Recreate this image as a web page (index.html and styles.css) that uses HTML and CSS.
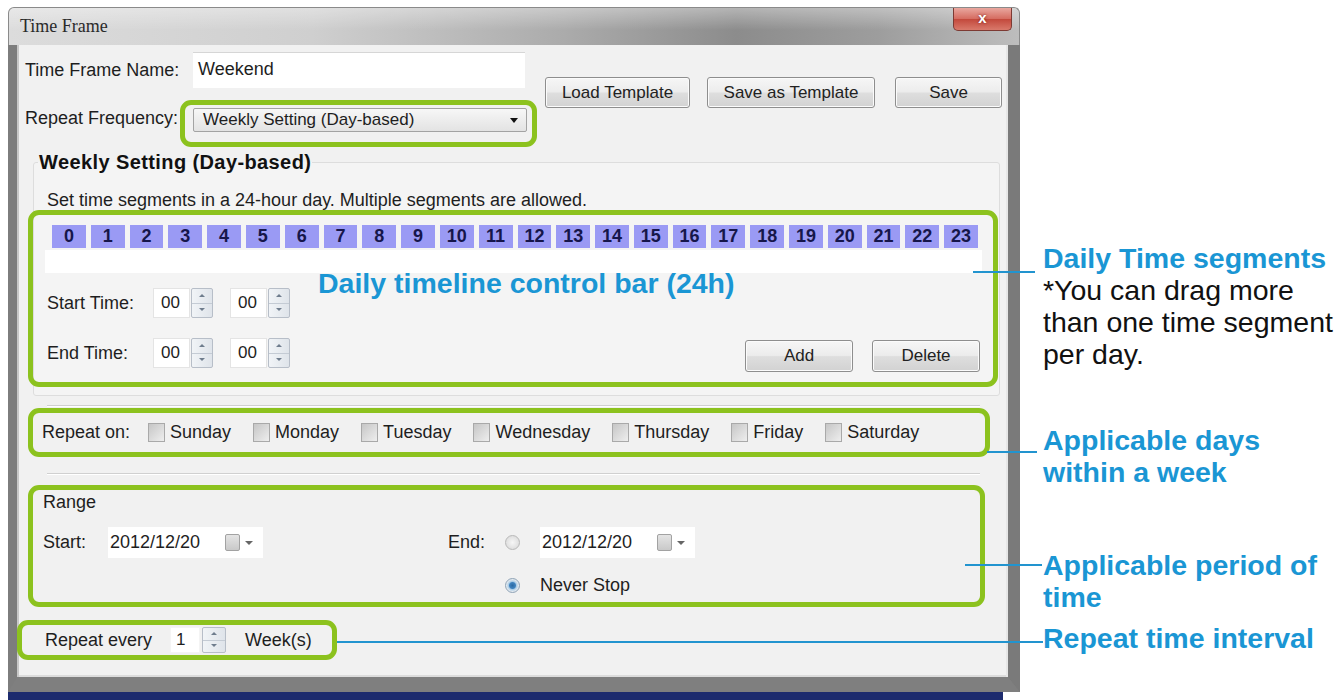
FILE: index.html
```html
<!DOCTYPE html>
<html>

	<head>
		<meta charset="utf-8" />
		<title>Time Frame</title>
		<link rel="stylesheet" href="styles.css">
	</head>

	<body>
		<div class="page">
			<div class="screen">
				<div class="window">
					<div class="titlebar">
						<span class="title">Time Frame</span>
						<span class="close">x</span>
					</div>
					<div class="frame">
						<div class="content">
							<div class="top">
								<div class="top-left">
									<div class="name-row">
										<span class="lbl-name">Time Frame Name:</span>
										<div class="textbox">Weekend</div>
									</div>
									<div class="freq-row">
										<span class="lbl-freq">Repeat Frequency:</span>
										<div class="hl hl-select">
											<div class="select">Weekly Setting (Day-based)<span class="caret"></span></div>
										</div>
									</div>
								</div>
								<div class="top-buttons">
									<button class="btn btn-load">Load Template</button>
									<button class="btn btn-tpl">Save as Template</button>
									<button class="btn btn-save">Save</button>
								</div>
							</div>

							<fieldset class="weekly">
								<legend>Weekly Setting (Day-based)</legend>
								<p class="hint">Set time segments in a 24-hour day. Multiple segments are allowed.</p>
								<div class="hl hl-timeline">
									<div class="hours">
										<span>0</span><span>1</span><span>2</span><span>3</span><span>4</span><span>5</span>
										<span>6</span><span>7</span><span>8</span><span>9</span><span>10</span><span>11</span>
										<span>12</span><span>13</span><span>14</span><span>15</span><span>16</span><span>17</span>
										<span>18</span><span>19</span><span>20</span><span>21</span><span>22</span><span>23</span>
									</div>
									<div class="strip"></div>
									<div class="note-bar">Daily timeline control bar (24h)</div>
									<div class="time-row">
										<span class="lbl-time">Start Time:</span>
										<span class="num">00</span><span class="spin"><i></i><i></i></span>
										<span class="num num-2">00</span><span class="spin"><i></i><i></i></span>
									</div>
									<div class="time-row end">
										<span class="lbl-time">End Time:</span>
										<span class="num">00</span><span class="spin"><i></i><i></i></span>
										<span class="num num-2">00</span><span class="spin"><i></i><i></i></span>
										<button class="btn btn-add">Add</button>
										<button class="btn btn-del">Delete</button>
									</div>
								</div>
							</fieldset>

							<hr class="sep">
							<div class="hl hl-days">
								<span class="lbl-repeat">Repeat on:</span>
								<span class="day"><span class="check"></span>Sunday</span>
								<span class="day"><span class="check"></span>Monday</span>
								<span class="day"><span class="check"></span>Tuesday</span>
								<span class="day"><span class="check"></span>Wednesday</span>
								<span class="day"><span class="check"></span>Thursday</span>
								<span class="day"><span class="check"></span>Friday</span>
								<span class="day"><span class="check"></span>Saturday</span>
							</div>
							<hr class="sep sep-2">

							<div class="hl hl-range">
								<div class="range-title">Range</div>
								<div class="range-row">
									<div class="start-part">
										<span class="lbl-start">Start:</span>
										<span class="date">2012/12/20<span class="cal"></span><span class="dd"></span></span>
									</div>
									<div class="end-part">
										<span>End:</span>
										<span class="radio"></span>
										<span class="date">2012/12/20<span class="cal"></span><span class="dd"></span></span>
										<span></span>
										<span class="radio on"></span>
										<span>Never Stop</span>
									</div>
								</div>
							</div>

							<div class="hl hl-repeat">
								<span class="lbl-every">Repeat every</span>
								<span class="num one">1</span><span class="spin small"><i></i><i></i></span>
								<span class="weeks">Week(s)</span>
							</div>
						</div>
					</div>
				</div>
				<div class="taskbar"></div>
			</div>

			<div class="notes">
				<div class="note-block">
					<div class="note-title">Daily Time segments</div>
					<div class="note-text">*You can drag more<br>than one time segment<br>per day.</div>
				</div>
				<div class="note-block note-days">
					<div class="note-title">Applicable days<br>within a week</div>
				</div>
				<div class="note-block note-period">
					<div class="note-title">Applicable period of<br>time</div>
				</div>
				<div class="note-block note-interval">
					<div class="note-title">Repeat time interval</div>
				</div>
			</div>

			<!-- connector lines from the green boxes to the notes -->
			<span class="link link-1"></span>
			<span class="link link-2"></span>
			<span class="link link-3"></span>
			<span class="link link-4"></span>
		</div>
	</body>

</html>
```

FILE: styles.css
```css
* {
	margin: 0;
	padding: 0;
	box-sizing: border-box;
}

body {
	font-family: "Liberation Sans", Arial, sans-serif;
	font-size: 18px;
	color: #1e1e1e;
	background: #fff;
}

.page {
	position: relative;
	width: 1340px;
	height: 700px;
	display: flex;
	overflow: hidden;
}

.screen {
	margin-left: 8px;
	padding-top: 7px;
	width: 1012px;
	display: flex;
	flex-direction: column;
}

/* window chrome */
.titlebar {
	height: 38px;
	display: flex;
	justify-content: space-between;
	align-items: flex-start;
	border-radius: 6px 6px 0 0;
	border: 1px solid #8a8a8a;
	border-bottom: none;
	background:
		linear-gradient(rgba(255, 255, 255, 0.35), rgba(255, 255, 255, 0) 60%),
		linear-gradient(to right, #dcdcdc 0%, #cfcfcf 30%, #ababab 55%, #8c8c8c 72%, #9d9d9d 86%, #bdbdbd 100%);
}

.title {
	font-family: "Liberation Serif", "Times New Roman", serif;
	font-size: 18px;
	line-height: 20px;
	color: #2a2a2a;
	margin: 8px 0 0 11px;
}

.close {
	width: 59px;
	height: 23px;
	margin-right: 7px;
	border: 1px solid #7d3a33;
	border-top: none;
	border-radius: 0 0 5px 5px;
	background: linear-gradient(#e9a79f, #d56b5f 50%, #c3493c 51%, #d9796b);
	color: #fff;
	font-weight: bold;
	font-size: 15px;
	line-height: 20px;
	text-align: center;
	text-shadow: 0 0 3px #7a1f15;
}

.frame {
	height: 647px;
	border-style: solid;
	border-width: 0 12px 15px 9px;
	border-color: #8b8b8b #7a7a7a #7f7f7f #7d7d7d;
	background: #f1f1f1;
	box-shadow: inset 2px 0 0 #c8c8c8, inset -2px 0 0 #e6e6e6, inset 0 -2px 0 #dcdcdc;
}

.content {
	height: 632px;
}

.taskbar {
	width: 995px;
	height: 8px;
	background: #1d2b6e;
}

/* top part */
.top {
	display: flex;
}

.top-left {
	width: 520px;
}

.name-row {
	display: flex;
	align-items: center;
	margin-top: 7px;
	height: 36px;
}

.lbl-name {
	width: 176px;
	padding-left: 8px;
}

.textbox {
	width: 332px;
	height: 36px;
	background: #fff;
	border-top: 1px solid #d6d6d6;
	padding-left: 5px;
	line-height: 32px;
}

.freq-row {
	display: flex;
	margin-top: 12px;
}

.lbl-freq {
	width: 163px;
	padding-left: 8px;
	margin-top: 8px;
	line-height: 20px;
	white-space: nowrap;
}

.hl {
	border: 5px solid #8cc21e;
	border-radius: 11px;
}

.hl-select {
	padding: 3px 5px 10px 8px;
}

.select {
	position: relative;
	width: 334px;
	height: 24px;
	border: 1px solid #a3a3a3;
	border-radius: 2px;
	background: linear-gradient(#f7f7f7, #e3e3e3);
	line-height: 22px;
	padding-left: 9px;
	font-size: 17px;
}

.caret {
	position: absolute;
	right: 8px;
	top: 9px;
	border-left: 4px solid transparent;
	border-right: 4px solid transparent;
	border-top: 5px solid #111;
}

.top-buttons {
	display: flex;
	margin: 32px 0 0 8px;
}

.btn {
	height: 31px;
	font-family: inherit;
	font-size: 17px;
	color: #222;
	border: 1px solid #8e8e8e;
	border-radius: 3px;
	background: linear-gradient(#f6f6f6 0%, #ececec 48%, #dedede 52%, #d2d2d2 100%);
	box-shadow: inset 0 0 0 1px #fbfbfb;
}

.btn-load {
	width: 145px;
}

.btn-tpl {
	width: 168px;
	margin-left: 17px;
}

.btn-save {
	width: 107px;
	margin-left: 20px;
}

/* weekly setting group */
.weekly {
	margin: 4px 0 0 16px;
	width: 967px;
	border: 1px solid #dddddd;
	border-radius: 3px;
	padding: 0 0 8px 0;
	background: #f4f4f4;
}

.weekly legend {
	margin-left: 4px;
	padding: 0 1px;
	font-weight: bold;
	font-size: 20px;
	letter-spacing: 0.4px;
	line-height: 22px;
	color: #111;
}

.hint {
	margin: 17px 0 0 13px;
	line-height: 20px;
}

.hl-timeline {
	position: relative;
	margin-left: -6px;
	width: 970px;
	padding-bottom: 10px;
}

.hours {
	display: grid;
	grid-template-columns: repeat(24, 1fr);
	column-gap: 5px;
	margin: 10px 15px 0 19px;
	height: 23px;
}

.hours span {
	background: #9a9af4;
	color: #16164a;
	font-weight: bold;
	font-size: 18px;
	line-height: 23px;
	text-align: center;
}

.strip {
	margin: 2px 11px 0 12px;
	height: 23px;
	background: #fff;
}

.note-bar {
	position: absolute;
	left: 285px;
	top: 54px;
	font-size: 28.5px;
	line-height: 28px;
	font-weight: bold;
	color: #1a96d4;
}

.time-row {
	display: flex;
	align-items: center;
	margin: 15px 0 0 14px;
	height: 30px;
}

.time-row.end {
	align-items: flex-start;
	height: auto;
	margin: 20px 13px 0 14px;
}

.lbl-time {
	width: 106px;
	line-height: 30px;
}

.num {
	width: 37px;
	height: 30px;
	background: #fff;
	border: 1px solid #e4e4e4;
	padding-left: 7px;
	line-height: 28px;
	font-size: 17px;
}

.num-2 {
	margin-left: 17px;
}

.spin {
	display: flex;
	flex-direction: column;
	width: 22px;
	height: 30px;
	margin-left: 1px;
	border: 1px solid #b7bec8;
	border-radius: 2px;
	background: linear-gradient(to right, #f1f4f7, #dfe4ea);
}

.spin i {
	position: relative;
	flex: 1;
}

.spin i + i {
	border-top: 1px solid #c4cbd4;
}

.spin i::after {
	content: "";
	position: absolute;
	left: 50%;
	top: 50%;
	margin: -2px 0 0 -3px;
	border-left: 3px solid transparent;
	border-right: 3px solid transparent;
	border-bottom: 3px solid #6f7d8d;
}

.spin i + i::after {
	border-bottom: none;
	border-top: 3px solid #6f7d8d;
}

.btn-add {
	width: 108px;
	height: 32px;
	margin: 2px 0 0 auto;
}

.btn-del {
	width: 108px;
	height: 32px;
	margin: 2px 0 0 19px;
}

/* separators */
.sep {
	margin: 9px 0 0 30px;
	width: 933px;
	border: none;
	border-top: 1px solid #d0d0d0;
	border-bottom: 1px solid #fff;
}

.sep-2 {
	margin-top: 16px;
}

/* repeat on */
.hl-days {
	display: flex;
	align-items: center;
	margin: 1px 0 0 11px;
	width: 962px;
	height: 49px;
	padding-left: 9px;
}

.lbl-repeat {
	width: 106px;
}

.day {
	display: flex;
	align-items: center;
	margin-right: 22px;
}

.check {
	width: 17px;
	height: 19px;
	margin-right: 5px;
	border: 1px solid #a9a9a9;
	background: linear-gradient(135deg, #c6c6c6, #eeeeee);
}

/* range */
.hl-range {
	margin: 10px 0 0 11px;
	width: 957px;
	height: 122px;
	padding: 2px 0 0 10px;
}

.range-title {
	line-height: 20px;
}

.range-row {
	display: flex;
	align-items: flex-start;
	margin-top: 15px;
}

.start-part {
	display: flex;
	align-items: center;
	height: 31px;
}

.lbl-start {
	width: 65px;
}

.date {
	display: flex;
	align-items: center;
	width: 155px;
	height: 31px;
	background: #fff;
	padding-left: 2px;
}

.cal {
	width: 15px;
	height: 17px;
	margin-left: auto;
	border: 1px solid #a2a2a2;
	border-radius: 2px;
	background: linear-gradient(#e4e4e4, #c9c9c9);
}

.dd {
	margin: 0 10px 0 5px;
	border-left: 4px solid transparent;
	border-right: 4px solid transparent;
	border-top: 4px solid #666;
}

.end-part {
	display: grid;
	grid-template-columns: 57px 35px 155px;
	grid-template-rows: 31px 24px;
	row-gap: 15px;
	align-items: center;
	margin-left: 185px;
}

.radio {
	width: 15px;
	height: 15px;
	border-radius: 50%;
	border: 1px solid #b8b8b8;
	background: radial-gradient(#f6f6f6, #d6d6d6);
}

.radio.on {
	border-color: #8fa3b6;
	background: radial-gradient(circle, #2c6aa3 0, #3f83bf 3px, #a9cbe6 4px, #e2e9ef 6px);
}

/* repeat every */
.hl-repeat {
	display: flex;
	align-items: center;
	margin-top: 13px;
	width: 320px;
	height: 40px;
	padding-left: 23px;
}

.lbl-every {
	width: 125px;
}

.num.one {
	width: 30px;
	height: 26px;
	line-height: 24px;
	padding-left: 5px;
	border-color: #f4f4f4;
}

.spin.small {
	width: 24px;
	height: 26px;
	margin-left: 2px;
}

.weeks {
	margin-left: 19px;
}

/* annotations */
.notes {
	margin-left: 23px;
	padding-top: 242px;
	font-size: 28.5px;
	line-height: 32px;
	white-space: nowrap;
}

.note-title {
	color: #1a96d4;
	font-weight: bold;
}

.note-text {
	color: #111;
}

.note-days {
	margin-top: 54px;
}

.note-period {
	margin-top: 61px;
}

.note-interval {
	margin-top: 9px;
}

.link {
	position: absolute;
	height: 2px;
	background: #2294cf;
}

.link-1 {
	left: 973px;
	top: 271px;
	width: 62px;
}

.link-2 {
	left: 987px;
	top: 451px;
	width: 50px;
}

.link-3 {
	left: 965px;
	top: 564px;
	width: 77px;
}

.link-4 {
	left: 337px;
	top: 641px;
	width: 706px;
}
```
